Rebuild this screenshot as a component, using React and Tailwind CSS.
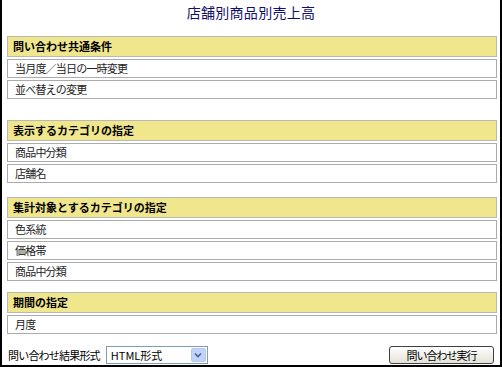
import React from "react";

const font = { fontFamily: '"Noto Sans CJK JP", "Noto Sans", sans-serif' };

function Section({ title, rows, className = "" }) {
  return (
    <div className={`flex flex-col gap-[2px] ${className}`}>
      <div className="h-[21px] bg-[#f0e68c] border border-[#b8b8b8] flex items-center pl-[5px] text-[11px] font-bold text-black leading-none">
        {title}
      </div>
      {rows.map((r, i) => (
        <div
          key={i}
          className="h-[19px] bg-white border border-[#ababab] flex items-center pl-[7px] text-[11px] tracking-[-0.8px] text-[#222] leading-none"
        >
          {r}
        </div>
      ))}
    </div>
  );
}

export default function App() {
  return (
    <div
      className="w-[502px] h-[367px] bg-white border-l-2 border-r-2 border-b-2 border-black flex flex-col overflow-hidden"
      style={font}
    >
      <div className="h-[36px] flex justify-center pt-[3px]">
        <div className="text-[14px] leading-[18px] text-[#101068] tracking-[0.3px]">店舗別商品別売上高</div>
      </div>
      <div className="ml-[5px] mr-[3px] flex flex-col">
        <Section title="問い合わせ共通条件" rows={["当月度／当日の一時変更", "並べ替えの変更"]} />
        <Section className="mt-[21px]" title="表示するカテゴリの指定" rows={["商品中分類", "店舗名"]} />
        <Section className="mt-[14px]" title="集計対象とするカテゴリの指定" rows={["色系統", "価格帯", "商品中分類"]} />
        <Section className="mt-[11px]" title="期間の指定" rows={["月度"]} />
        <div className="mt-[12px] flex items-center h-[18px]">
          <div className="text-[11px] tracking-[-0.8px] text-black leading-none ml-[1px]">問い合わせ結果形式</div>
          <div className="ml-[6px] w-[102px] h-[18px] border border-[#7f9db9] bg-white flex items-center justify-between">
            <span className="pl-[4px] text-[11px] text-black leading-none">HTML形式</span>
            <span className="w-[15px] h-[14px] mr-[1px] bg-[#c1d3fb] border border-[#b7c8f0] rounded-[2px] flex items-center justify-center">
              <svg width="8" height="6" viewBox="0 0 8 6">
                <path d="M1 1.5 L4 4.5 L7 1.5" fill="none" stroke="#4d6185" strokeWidth="1.6" />
              </svg>
            </span>
          </div>
          <div className="flex-1" />
          <div className="mr-[3px] w-[105px] h-[18px] border border-[#404040] rounded-[3px] bg-gradient-to-b from-white to-[#e4e2d8] flex items-center justify-center text-[11px] tracking-[-1px] text-black leading-none">
            問い合わせ実行
          </div>
        </div>
      </div>
    </div>
  );
}
